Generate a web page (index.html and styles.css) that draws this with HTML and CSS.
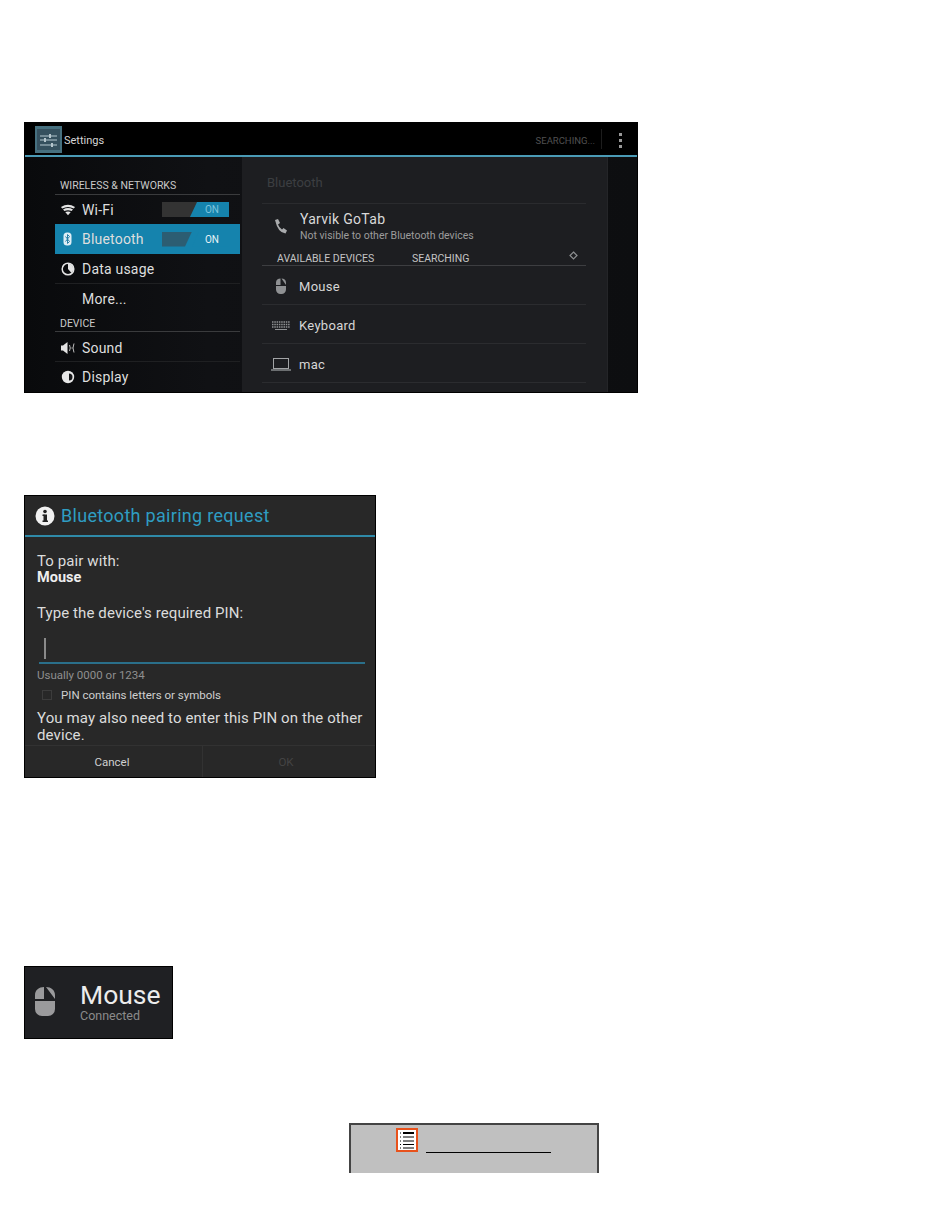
FILE: index.html
```html
<!DOCTYPE html>
<html lang="en">
<head>
<meta charset="utf-8">
<title>Bluetooth settings</title>
<link rel="stylesheet" href="styles.css">
</head>
<body>
<main class="page">
  <section class="shot settings">
    <header class="bar">
      <span class="app-icon">
        <svg width="27" height="27" viewBox="0 0 27 27"><rect width="27" height="27" fill="#46707f"/><rect x="2" y="3" width="23" height="21" fill="#35505e"/><path d="M5 10h17M5 14h17M5 19h17" stroke="#8aa0aa" stroke-width="1.400"/><path d="M15 8v4M10 12v4M17 17v4" stroke="#b5c5cc" stroke-width="2"/></svg>
      </span>
      <span class="bar-title">Settings</span>
      <span class="bar-action">SEARCHING...</span>
      <span class="bar-sep"></span>
      <span class="overflow"><i></i><i></i><i></i></span>
    </header>
    <div class="split">
      <nav class="menu">
        <div class="cat first">WIRELESS &amp; NETWORKS</div>
        <div class="row tight">
          <svg class="ico" width="16" height="14" viewBox="0 0 16 14"><path d="M1 4Q8-.5 15 4L13.800 5.500Q8 2.400 2.200 5.500zM3 6.500Q8 3.700 13 6.500L11.600 8Q8 6.500 4.400 8zM5.200 9Q8 7.800 10.800 9L8 12.200z" fill="#e4e4e4"/></svg>
          <span class="label">Wi-Fi</span>
          <span class="toggle"><span class="toggle-off"></span><span class="toggle-on">ON</span></span>
        </div>
        <div class="row active">
          <svg class="ico" width="16" height="16" viewBox="0 0 16 16"><rect x="3.500" y="1.500" width="8" height="13" rx="3.500" fill="#dfeef5"/><path d="M5.500 5.500l4 5-2 2v-9l2 2-4 5" stroke="#2a7fa5" stroke-width="1" fill="none"/></svg>
          <span class="label">Bluetooth</span>
          <span class="toggle"><span class="toggle-off"></span><span class="toggle-on">ON</span></span>
        </div>
        <div class="row">
          <svg class="ico" width="16" height="16" viewBox="0 0 16 16"><circle cx="8" cy="8" r="5.800" fill="none" stroke="#e4e4e4" stroke-width="1.500"/><path d="M8 2.500A5.500 5.500 0 0 1 11.500 12L8 8z" fill="#e4e4e4"/></svg>
          <span class="label">Data usage</span>
        </div>
        <div class="row last"><span class="ico-space"></span><span class="label">More...</span></div>
        <div class="cat second">DEVICE</div>
        <div class="row">
          <svg class="ico" width="16" height="16" viewBox="0 0 16 16"><path d="M1 5.500h2L7.500 2v12L3 10.500H1z" fill="#e4e4e4"/><path d="M9.500 5q1.500 3 0 6M11.500 8h1M14 3.500q-2 4.500 0 9" stroke="#bbb" stroke-width="1" fill="none"/></svg>
          <span class="label">Sound</span>
        </div>
        <div class="row last">
          <svg class="ico" width="16" height="16" viewBox="0 0 16 16"><circle cx="8" cy="8" r="6.200" fill="#e8e8e8"/><path d="M9 4.500A3.500 3.500 0 0 1 9 11.500z" fill="#17181a"/></svg>
          <span class="label">Display</span>
        </div>
      </nav>
      <div class="panel">
        <div class="panel-title">Bluetooth</div>
        <div class="device-self">
          <svg class="dev-ico phone" width="16" height="17" viewBox="0 0 16 17"><path d="M2 2l3-1 2 4-2 1.500q1 3 4 5l1.500-1.500 3.500 2.500-1.500 3Q5 15 2 2z" fill="#a9abad"/></svg>
          <div>
            <div class="self-name">Yarvik GoTab</div>
            <div class="self-sub">Not visible to other Bluetooth devices</div>
          </div>
        </div>
        <div class="avail">
          <span class="avail-a">AVAILABLE DEVICES</span>
          <span class="avail-b">SEARCHING</span>
          <svg class="spin" width="9" height="9" viewBox="0 0 9 9"><path d="M4.500 1L8 4.500 4.500 8 1 4.500z" fill="none" stroke="#8b8d8f" stroke-width="1.200"/></svg>
        </div>
        <div class="dev">
          <svg class="dev-ico" width="22" height="16" viewBox="0 0 22 16"><path d="M6 7V4.500C6 2 8 .5 10.500 .5V7zM11.500 .5C14 .5 16 2 16 4.500V7zM6 8h10v3.500a4.500 4.500 0 0 1-4.500 4.500h-1A4.500 4.500 0 0 1 6 11.500z" fill="#8f9193"/></svg>
          <span>Mouse</span>
        </div>
        <div class="dev">
          <svg class="dev-ico" width="22" height="16" viewBox="0 0 22 16"><path d="M2 5h18M2 7.500h18M2 10h18" stroke="#8f9193" stroke-width="1.500" stroke-dasharray="1.500 .8"/><path d="M5 12.500h12" stroke="#8f9193"/></svg>
          <span>Keyboard</span>
        </div>
        <div class="dev">
          <svg class="dev-ico" width="22" height="16" viewBox="0 0 22 16"><rect x="3.500" y="2.500" width="15" height="10" fill="none" stroke="#a2a4a6"/><path d="M1 14h20" stroke="#a2a4a6" stroke-width="1.200"/></svg>
          <span>mac</span>
        </div>
      </div>
    </div>
  </section>

  <section class="shot dialog">
    <header class="dlg-head">
      <svg width="20" height="20" viewBox="0 0 20 20"><circle cx="10" cy="10" r="9.500" fill="#f1f1f1"/><rect x="8.500" y="8.500" width="3.500" height="7" fill="#222"/><rect x="7.500" y="8.500" width="2" height="1.500" fill="#222"/><rect x="7.500" y="14.500" width="5.500" height="1.500" fill="#222"/><circle cx="10" cy="5.500" r="1.800" fill="#222"/></svg>
      <span class="dlg-title">Bluetooth pairing request</span>
    </header>
    <div class="dlg-body">
      <div class="t-main">To pair with:</div>
      <div class="t-bold">Mouse</div>
      <div class="t-main prompt">Type the device's required PIN:</div>
      <div class="pin"><span class="caret"></span></div>
      <div class="hint">Usually 0000 or 1234</div>
      <div class="check"><span class="box"></span><span>PIN contains letters or symbols</span></div>
      <div class="t-main note">You may also need to enter this PIN on the other device.</div>
    </div>
    <footer class="dlg-foot">
      <span class="btn">Cancel</span>
      <span class="btn off">OK</span>
    </footer>
  </section>

  <section class="shot connected">
    <svg class="conn-ico" width="20" height="29" viewBox="0 0 20 29"><path d="M0 12V8C0 3 4 0 9 0V12zM11 0C16 0 20 3 20 8V12zM0 14h20v8a7 7 0 0 1-7 7H7a7 7 0 0 1-7-7z" fill="#9a9a9c"/></svg>
    <div class="conn-text">
      <div class="conn-name">Mouse</div>
      <div class="conn-sub">Connected</div>
    </div>
  </section>

  <section class="tip">
    <svg class="tip-ico" width="22" height="24" viewBox="0 0 22 24"><rect x="1" y="1" width="20" height="22" fill="#fff" stroke="#e8521c" stroke-width="2"/><path d="M7 5h11" stroke="#000" stroke-width="2"/><path d="M7 9h11M7 13h11M7 16.500h11M7 20h11" stroke="#000"/><path d="M4 5h1M4 9h1M4 13h1M4 16.500h1M4 20h1" stroke="#000"/></svg>
    <span class="tip-line"></span>
  </section>
</main>
</body>
</html>
```

FILE: styles.css
```css
* { box-sizing: border-box; }
html, body { margin: 0; padding: 0; background: #fff; }
body { font-family: Roboto, "Liberation Sans", sans-serif; }
.page { width: 950px; height: 1229px; padding: 122px 0 0 24px; overflow: hidden; }
.shot { border: 1px solid #000; color: #e6e6e6; }

/* settings */
.settings { width: 614px; height: 271px; background: #0b0c0e; display: flex; flex-direction: column; }
.bar { height: 34px; flex: none; background: #000; border-bottom: 2px solid #4a9ab5; display: flex; align-items: center; padding: 0 15px 0 10px; }
.app-icon { display: flex; width: 27px; height: 27px; margin-right: 2px; }
.bar-title { font-size: 11px; color: #d5d5d5; padding-top: 3px; }
.bar-action { margin-left: auto; font-size: 9.500px; color: #505050; padding-top: 3px; }
.bar-sep { width: 1px; height: 20px; background: #1d1d1d; margin: 0 17px 0 6px; }
.overflow { display: flex; flex-direction: column; gap: 3px; padding-top: 2px; }
.overflow i { display: block; width: 3px; height: 3px; background: #999; }
.split { flex: 1; min-height: 0; display: flex; overflow: hidden; background: linear-gradient(90deg, #090a0c, #101114 30%, #0d0e10); }
.menu { width: 185px; margin-left: 30px; flex: none; }
.cat { font-size: 10.500px; color: #c9c9c9; padding: 0 0 3px 5px; height: 15px; line-height: 12px; border-bottom: 1px solid #3a3b3d; }
.cat.first { margin-top: 23px; }
.cat.second { height: 19px; padding: 5px 0 1px 5px; }
.cat.second + .row { padding-top: 2px; }
.row { height: 30px; display: flex; align-items: center; padding-left: 5px; border-bottom: 1px solid #1f2022; }
.row.tight { height: 29px; border-bottom: 0; }
.row.last { border-bottom: 0; height: 29px; }
.row.active { background: #1583ad; border-bottom: 0; }
.ico { width: 16px; flex: none; margin-right: 6px; }
.ico-space { width: 16px; margin-right: 6px; }
.label { font-size: 14px; letter-spacing: .2px; color: #dedede; }
.toggle { margin-left: auto; margin-right: 11px; width: 67px; height: 15px; display: flex; background: #333; }
.active .toggle { background: transparent; }
.toggle-off { width: 28px; }
.active .toggle-off { background: #2c5d72; width: 30px; clip-path: polygon(0 0, 100% 0, calc(100% - 7px) 100%, 0 100%); }
.toggle-on { flex: 1; background: #1583ad; font-size: 10px; line-height: 15px; text-align: right; padding-right: 10px; color: #7fc4dd; clip-path: polygon(7px 0, 100% 0, 100% 100%, 0 100%); }
.active .toggle-on { color: #e8f3f7; }
.panel { width: 365px; margin-left: 2px; flex: none; background: #1d1e21; padding: 0 21px 0 20px; box-shadow: 1px 0 0 #242528; }
.panel-title { height: 47px; padding: 18px 0 0 5px; font-size: 13px; color: #3c3e41; border-bottom: 1px solid #2a2b2e; }
.device-self { display: flex; align-items: center; height: 50px; padding: 0 0 6px 11px; }
.phone { margin-right: 11px; }
.self-name { font-size: 14px; letter-spacing: .3px; color: #d9d9d9; line-height: 18px; }
.self-sub { font-size: 10.500px; color: #9c9c9c; line-height: 14px; margin-top: 1px; }
.avail { height: 15px; margin-top: -3px; display: flex; align-items: center; font-size: 10.500px; color: #c4c4c4; border-bottom: 1px solid #3d3e41; padding-left: 15px; }
.avail-a { width: 135px; }
.spin { margin-left: auto; margin-right: 8px; margin-top: -5px; }
.dev { height: 39px; display: flex; align-items: center; font-size: 13px; letter-spacing: .3px; color: #d6d6d6; border-bottom: 1px solid #2b2c2f; padding: 2px 0 0 8px; }
.dev .dev-ico { margin-right: 7px; }

/* dialog */
.dialog { width: 352px; height: 283px; margin-top: 102px; background: #282828; display: flex; flex-direction: column; }
.dlg-head { height: 41px; flex: none; display: flex; align-items: center; padding: 0 0 0 10px; border-bottom: 2px solid #2f8aa8; gap: 6px; }
.dlg-title { font-size: 18px; letter-spacing: .3px; color: #2f9dc2; }
.dlg-body { flex: 1; min-height: 0; padding: 16px 10px 0 12px; }
.t-main { font-size: 15px; letter-spacing: .1px; line-height: 17px; color: #dcdcdc; }
.t-bold { font-size: 14.500px; line-height: 16px; font-weight: 700; color: #eee; }
.prompt { margin-top: 19px; }
.pin { height: 33px; margin: 9px 0 0 2px; width: 326px; border-bottom: 2px solid #2a6f8a; padding-top: 7px; }
.caret { display: block; width: 2px; height: 21px; background: #8a8a8a; margin-left: 5px; }
.hint { font-size: 11.500px; line-height: 13px; margin-top: 5px; color: #8f8f8f; }
.check { display: flex; align-items: center; font-size: 11.500px; color: #cfcfcf; margin-top: 6px; height: 14px; }
.box { width: 10px; height: 10px; border: 1px solid #3c3c3c; margin: 0 9px 0 5px; }
.note { margin-top: 8px; }
.dlg-foot { height: 32px; flex: none; display: flex; border-top: 1px solid #323232; }
.btn { width: 177px; text-align: center; font-size: 11.500px; line-height: 33px; color: #d0d0d0; padding-right: 3px; }
.btn.off { flex: 1; color: #444; border-left: 1px solid #323232; padding-right: 6px; }

/* connected */
.connected { width: 149px; height: 73px; margin-top: 188px; background: #1f2023; display: flex; align-items: center; padding: 0 0 0 10px; }
.conn-ico { margin-top: -2px; }
.conn-text { margin-left: 25px; margin-top: -2px; }
.conn-name { font-size: 26.500px; line-height: 27px; color: #ececec; }
.conn-sub { font-size: 12.500px; line-height: 13px; margin-top: 1px; color: #8b8b8b; }

/* tip */
.tip { width: 250px; height: 50px; margin: 84px 0 0 325px; background: #c0c0c0; border: solid #444; border-width: 2px 2px 0; display: flex; align-items: flex-start; padding: 3px 0 0 45px; }
.tip-line { width: 125px; height: 1px; background: #000; margin: 24px 0 0 8px; }
```
